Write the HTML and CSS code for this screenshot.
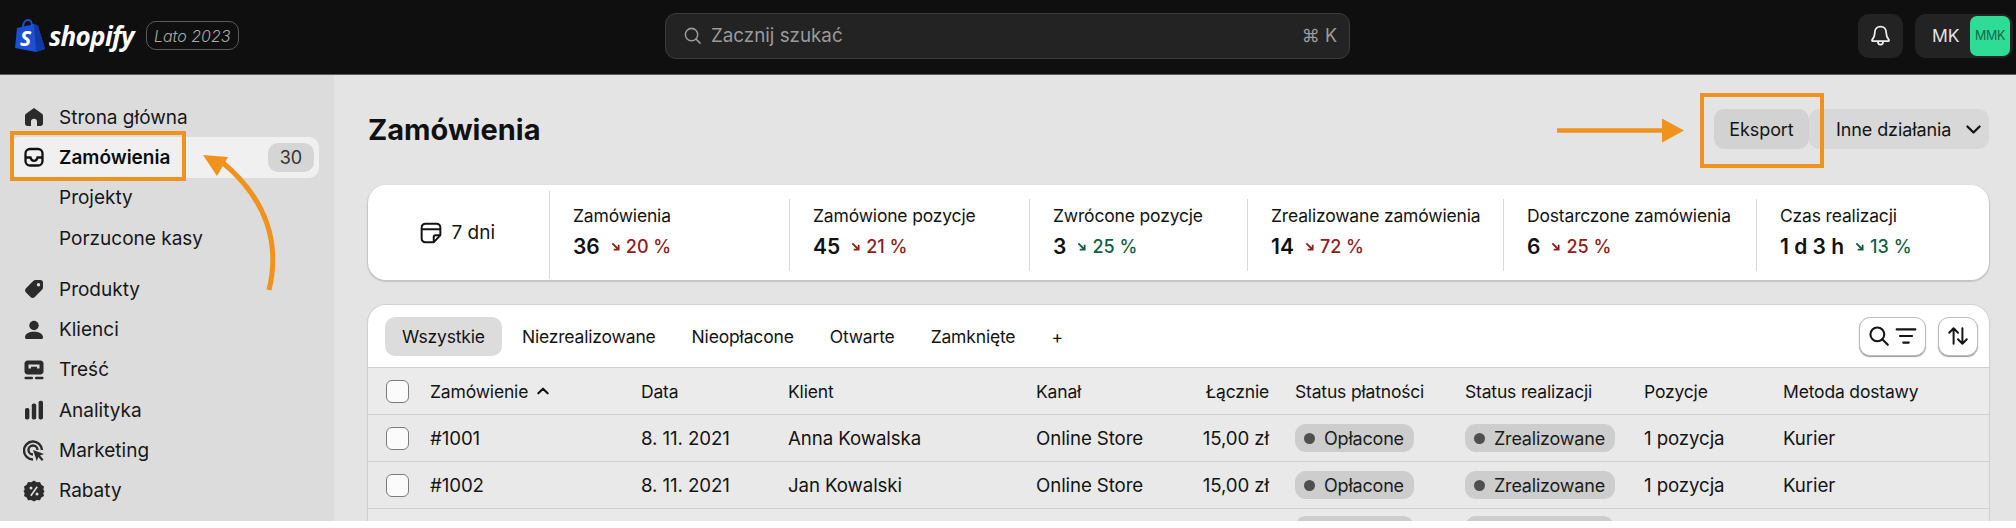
FILE: index.html
```html
<!DOCTYPE html>
<html lang="pl">
<head>
<meta charset="utf-8">
<title>Zamówienia</title>
<link rel="stylesheet" href="styles.css">
</head>
<body>
<div class="app">
  <header class="topbar">
    <div class="brand">
      <svg class="bag" viewBox="0 0 32 34"><path d="M3 9 L20 5 L24 7 L31 30 L22 33 L1 29Z" fill="#1d4fd3"/><path d="M20 5 L24 7 L31 30 L22 33Z" fill="#0f3aa6"/><path d="M9 8C9 3 12 1 14 1C17 1 18 3 18 7" fill="none" stroke="#1d4fd3" stroke-width="1.8"/><text x="6" y="27" class="bag-s">S</text></svg>
      <span class="wordmark">shopify</span>
      <span class="edition">Lato 2023</span>
    </div>
    <div class="search">
      <svg class="search-icon" viewBox="0 0 20 20"><circle cx="9" cy="9" r="6.5" fill="none" stroke="currentColor" stroke-width="1.6"/><path d="M13.8 13.8L18 18" stroke="currentColor" stroke-width="1.6" stroke-linecap="round"/></svg>
      <span class="search-text">Zacznij szukać</span>
      <span class="kbd">⌘ K</span>
    </div>
    <div class="top-actions">
      <button class="bell"><svg viewBox="0 0 22 22" class="bell-icon"><path d="M11 2.5C7.5 2.5 5.5 5 5.5 8.5C5.5 12 4.6 13.4 3 15.2C2.6 15.7 2.9 16.3 3.5 16.3H18.5C19.1 16.3 19.4 15.7 19 15.2C17.4 13.4 16.500 12 16.500 8.5C16.500 5 14.500 2.500 11 2.500Z" fill="none" stroke="currentColor" stroke-width="1.7"/><path d="M8.500 16.500C8.500 18.500 9.500 19.800 11 19.800C12.500 19.800 13.500 18.500 13.500 16.500" fill="none" stroke="currentColor" stroke-width="1.7"/></svg></button>
      <div class="account"><span class="initials">MK</span><span class="avatar">MMK</span></div>
    </div>
  </header>

  <div class="content">
    <nav class="sidebar">
      <div class="nav-group">
        <a class="nav-item"><svg class="nav-icon" viewBox="0 0 20 20"><path d="M10 1L2.300 6.600C1.500 7.200 1 8 1 9V16.500C1 18 2 19 3.500 19H7V14.500C7 12.800 8.200 11.800 10 11.800C11.800 11.800 13 12.800 13 14.500V19H16.500C18 19 19 18 19 16.500V9C19 8 18.500 7.200 17.700 6.600Z"/></svg><span>Strona główna</span></a>
        <a class="nav-item active"><svg class="nav-icon" viewBox="0 0 20 20"><rect x="1.500" y="2" width="17" height="16.500" rx="4.500" fill="none" stroke="currentColor" stroke-width="2.300"/><path d="M2 10.500H6.500C7 12.700 8.200 13.800 10 13.800C11.800 13.800 13 12.700 13.500 10.500H18" fill="none" stroke="currentColor" stroke-width="2.300"/></svg><span>Zamówienia</span><span class="count">30</span></a>
        <a class="nav-item"><span class="nav-spacer"></span><span>Projekty</span></a>
        <a class="nav-item"><span class="nav-spacer"></span><span>Porzucone kasy</span></a>
      </div>
      <div class="nav-group">
        <a class="nav-item"><svg class="nav-icon" viewBox="0 0 20 20"><path fill-rule="evenodd" d="M11.500 1H16.500C18 1 19 2 19 3.500V8.500C19 9.300 18.700 10.200 18 10.800L10.800 18C9.600 19.200 7.700 19.200 6.500 18L2 13.500C.8 12.300 .8 10.400 2 9.200L9.200 2C9.800 1.300 10.700 1 11.500 1ZM14.500 7.500A1.700 1.700 0 1 0 14.500 4.100A1.700 1.700 0 0 0 14.500 7.500Z"/></svg><span>Produkty</span></a>
        <a class="nav-item"><svg class="nav-icon" viewBox="0 0 20 20"><circle cx="10" cy="5.500" r="4.700"/><path d="M1 17.500C1 13.800 5 11.800 10 11.800C15 11.800 19 13.800 19 17.500C19 18.400 18.400 19 17.500 19H2.500C1.600 19 1 18.400 1 17.500Z"/></svg><span>Klienci</span></a>
        <a class="nav-item"><svg class="nav-icon" viewBox="0 0 20 20"><path fill-rule="evenodd" d="M3.500 .5H16.500C18.100 .5 19.500 1.900 19.500 3.500V11.500C19.500 13.100 18.100 14.500 16.500 14.500H3.500C1.900 14.500 .5 13.100 .5 11.500V3.500C.5 1.900 1.900 .5 3.500 .5ZM4.500 4.500V8.500H7V6.800H13V8.500H15.500V4.500Z"/><rect x=".5" y="16.800" width="8.500" height="2.400" rx="1"/><rect x="11" y="16.800" width="8.500" height="2.400" rx="1"/></svg><span>Treść</span></a>
        <a class="nav-item"><svg class="nav-icon" viewBox="0 0 20 20"><rect x="1" y="8" width="4.400" height="11.500" rx="1.800"/><rect x="7.800" y="3.500" width="4.400" height="16" rx="1.800"/><rect x="14.600" y=".8" width="4.400" height="18.700" rx="1.800"/></svg><span>Analityka</span></a>
        <a class="nav-item"><svg class="nav-icon wide" viewBox="0 0 22 22"><path d="M10 19.500A9 9 0 1 1 19 10" fill="none" stroke="currentColor" stroke-width="2.400"/><path d="M10 14.500A4.500 4.500 0 1 1 14.500 10" fill="none" stroke="currentColor" stroke-width="2.400"/><path d="M10 10L21 14L17 15.600L20.500 19.500L18.800 21L15.400 17L13.800 21Z"/></svg><span>Marketing</span></a>
        <a class="nav-item"><svg class="nav-icon wide" viewBox="0 0 22 22"><path fill-rule="evenodd" d="M11 .5L13.800 2.200L17 1.900L18.300 4.800L21 6.500L20.300 9.700L21.500 11L20.300 13.500L21 16L18.300 17.500L17 20.300L13.800 20L11 21.500L8.200 20L5 20.300L3.700 17.500L1 16L1.700 13.500L.5 11L1.700 9.700L1 6.500L3.700 4.800L5 1.900L8.200 2.200ZM7.200 15.200L8.500 16.300L14.800 7.200L13.500 6.200ZM8 9.500A1.500 1.500 0 1 0 8 6.500A1.500 1.500 0 0 0 8 9.500ZM14 15.500A1.500 1.500 0 1 0 14 12.500A1.500 1.500 0 0 0 14 15.500Z"/></svg><span>Rabaty</span></a>
      </div>
    </nav>

    <main class="main">
      <div class="page-head">
        <h1 class="page-title">Zamówienia</h1>
        <div class="page-actions">
          <button class="btn">Eksport</button>
          <button class="btn more">Inne działania <svg class="chev" viewBox="0 0 14 14"><path d="M2 4.500L7 9.500L12 4.500" fill="none" stroke="currentColor" stroke-width="1.900" stroke-linecap="round" stroke-linejoin="round"/></svg></button>
        </div>
      </div>

      <section class="metrics">
        <div class="metric period"><svg class="note" viewBox="0 0 20 20"><path d="M5 1.500H15C17 1.500 18.500 3 18.500 5V12L12.500 18.500H5C3 18.500 1.500 17 1.500 15V5C1.500 3 3 1.500 5 1.500Z" fill="none" stroke="currentColor" stroke-width="1.800"/><path d="M1.500 6.500H18.500M18.500 12H14C13 12 12.500 12.500 12.500 13.500V18.500" fill="none" stroke="currentColor" stroke-width="1.800"/></svg><span>7 dni</span></div>
        <div class="metric"><div class="m-label">Zamówienia</div><div class="m-value"><b>36</b><span class="delta bad"><svg class="trend" viewBox="0 0 10 10"><path d="M1.500 1.500L7.500 7.500M8.500 3V8.500H3" fill="none" stroke="currentColor" stroke-width="2"/></svg>20 %</span></div></div>
        <div class="metric"><div class="m-label">Zamówione pozycje</div><div class="m-value"><b>45</b><span class="delta bad"><svg class="trend" viewBox="0 0 10 10"><path d="M1.500 1.500L7.500 7.500M8.500 3V8.500H3" fill="none" stroke="currentColor" stroke-width="2"/></svg>21 %</span></div></div>
        <div class="metric"><div class="m-label">Zwrócone pozycje</div><div class="m-value"><b>3</b><span class="delta good"><svg class="trend" viewBox="0 0 10 10"><path d="M1.500 1.500L7.500 7.500M8.500 3V8.500H3" fill="none" stroke="currentColor" stroke-width="2"/></svg>25 %</span></div></div>
        <div class="metric"><div class="m-label">Zrealizowane zamówienia</div><div class="m-value"><b>14</b><span class="delta bad"><svg class="trend" viewBox="0 0 10 10"><path d="M1.500 1.500L7.500 7.500M8.500 3V8.500H3" fill="none" stroke="currentColor" stroke-width="2"/></svg>72 %</span></div></div>
        <div class="metric"><div class="m-label">Dostarczone zamówienia</div><div class="m-value"><b>6</b><span class="delta bad"><svg class="trend" viewBox="0 0 10 10"><path d="M1.500 1.500L7.500 7.500M8.500 3V8.500H3" fill="none" stroke="currentColor" stroke-width="2"/></svg>25 %</span></div></div>
        <div class="metric"><div class="m-label">Czas realizacji</div><div class="m-value"><b>1 d 3 h</b><span class="delta good"><svg class="trend" viewBox="0 0 10 10"><path d="M1.500 1.500L7.500 7.500M8.500 3V8.500H3" fill="none" stroke="currentColor" stroke-width="2"/></svg>13 %</span></div></div>
      </section>

      <section class="orders">
        <div class="tabs">
          <span class="tab selected">Wszystkie</span>
          <span class="tab">Niezrealizowane</span>
          <span class="tab">Nieopłacone</span>
          <span class="tab">Otwarte</span>
          <span class="tab">Zamknięte</span>
          <span class="tab">+</span>
          <div class="tools">
            <button class="tool filter"><svg class="tool-icon" viewBox="0 0 20 20"><circle cx="8.500" cy="8.500" r="6.300" fill="none" stroke="currentColor" stroke-width="1.900"/><path d="M13 13L18 18" stroke="currentColor" stroke-width="1.900" stroke-linecap="round"/></svg><svg class="tool-icon" viewBox="0 0 20 20"><path d="M1.500 4H18.500M4.500 10H15.500M7.500 16H12.500" stroke="currentColor" stroke-width="1.900" stroke-linecap="round"/></svg></button>
            <button class="tool sort"><svg class="tool-icon" viewBox="0 0 20 20"><path d="M6 17V3M2 7L6 3L10 7M14 3V17M10 13L14 17L18 13" fill="none" stroke="currentColor" stroke-width="1.800" stroke-linecap="round" stroke-linejoin="round"/></svg></button>
          </div>
        </div>
        <div class="row head">
          <span class="check-cell"><span class="check"></span></span>
          <span class="sort-head">Zamówienie <svg class="caret" viewBox="0 0 12 12"><path d="M2 8L6 4L10 8" fill="none" stroke="currentColor" stroke-width="1.800" stroke-linecap="round" stroke-linejoin="round"/></svg></span>
          <span>Data</span><span>Klient</span><span>Kanał</span><span class="total">Łącznie</span><span>Status płatności</span><span>Status realizacji</span><span>Pozycje</span><span>Metoda dostawy</span>
        </div>
        <div class="row">
          <span class="check-cell"><span class="check"></span></span>
          <span>#1001</span><span>8. 11. 2021</span><span>Anna Kowalska</span><span>Online Store</span><span class="total">15,00 zł</span>
          <span><span class="pill"><i class="dot"></i>Opłacone</span></span><span><span class="pill"><i class="dot"></i>Zrealizowane</span></span><span>1 pozycja</span><span>Kurier</span>
        </div>
        <div class="row">
          <span class="check-cell"><span class="check"></span></span>
          <span>#1002</span><span>8. 11. 2021</span><span>Jan Kowalski</span><span>Online Store</span><span class="total">15,00 zł</span>
          <span><span class="pill"><i class="dot"></i>Opłacone</span></span><span><span class="pill"><i class="dot"></i>Zrealizowane</span></span><span>1 pozycja</span><span>Kurier</span>
        </div>
        <div class="row">
          <span class="check-cell"></span>
          <span></span><span></span><span></span><span></span><span></span>
          <span><span class="pill ghost"></span></span><span><span class="pill ghost wide"></span></span><span></span><span></span>
        </div>
      </section>
    </main>

    <div class="callout callout-nav"></div>
    <div class="callout callout-export"></div>
    <svg class="arrows" viewBox="0 0 2016 446">
      <path d="M269 215C280 170 268 125 222 87" fill="none" stroke="#f0931e" stroke-width="5"/>
      <path d="M203 80L228 82L217 101Z" fill="#f0931e"/>
      <path d="M1557 55.500H1664" fill="none" stroke="#f0931e" stroke-width="4.500"/>
      <path d="M1662 43.500L1684 55.500L1662 67.500Z" fill="#f0931e"/>
    </svg>
  </div>
</div>
</body>
</html>
```
FILE: styles.css
```css
* { box-sizing: border-box; }
html, body { margin: 0; padding: 0; background: #fff; }
body { font-family: Inter, "Liberation Sans", sans-serif; color: #141414; font-size: 18px; }
button { font: inherit; color: inherit; border: 0; padding: 0; }

.app { height: 521px; overflow: hidden; display: flex; flex-direction: column; }

.topbar { height: 75px; flex: none; background: #0f0f0f; border-bottom: 1px solid #5c5c5c; padding-bottom: 3px; display: grid; grid-template-columns: 665px 685px 1fr; align-items: center; }
.brand { display: flex; align-items: center; padding-left: 14px; }
.bag { width: 32px; height: 34px; }
.bag-s { font: italic 700 21px "Open Sans", sans-serif; fill: #fff; }
.wordmark { font: italic 700 26px/34px "Open Sans", sans-serif; color: #fff; margin-left: 3px; letter-spacing: -.7px; }
.edition { margin-left: 12px; height: 29px; width: 93px; border: 1px solid #5a5a5a; border-radius: 10px; color: #a8a8a8; font-size: 16px; font-style: italic; font-weight: 300; display: flex; align-items: center; justify-content: center; }

.search { height: 46px; background: #232323; border: 1px solid #3c3c3c; border-radius: 11px; display: flex; align-items: center; padding: 0 12px 0 17px; color: #9b9b9b; }
.search-icon { width: 19px; height: 19px; }
.search-text { margin-left: 9px; font-size: 18.800px; }
.kbd { margin-left: auto; font-size: 18px; }

.top-actions { display: flex; justify-content: flex-end; gap: 12px; padding-right: 3px; }
.bell { width: 45px; height: 44px; background: #232323; border-radius: 11px; color: #eee; display: flex; align-items: center; justify-content: center; }
.bell-icon { width: 23px; height: 23px; }
.account { width: 98px; height: 44px; background: #232323; border-radius: 11px; display: flex; align-items: center; justify-content: space-between; padding: 0 3px 0 17px; color: #e3e3e3; }
.initials { font-size: 17.500px; }
.avatar { width: 40px; height: 40px; background: #2fdc96; border-radius: 7px; color: #0f6b4a; font-size: 12.500px; display: flex; align-items: center; justify-content: center; letter-spacing: -.3px; }

.content { position: relative; flex: 1; display: flex; min-height: 0; background: #e4e4e4; }

.sidebar { width: 334px; flex: none; background: #dcdcdc; padding: 22px 15px 0 10px; }
.nav-group + .nav-group { margin-top: 11px; }
.nav-item { height: 40.300px; display: flex; align-items: center; padding: 0 5px 0 14px; border-radius: 10px; font-size: 19px; color: #171717; }
.nav-icon { width: 20px; height: 20px; flex: none; margin-right: 15px; fill: #2b2b2b; color: #2b2b2b; }
.nav-icon.wide { width: 22px; height: 22px; margin: 0 14px 0 -1px; }
.nav-spacer { width: 20px; margin-right: 15px; }
.nav-item.active { background: #f0f0f0; font-weight: 600; color: #0c0c0c; }
.nav-item.active .nav-icon { fill: none; color: #111; }
.count { margin-left: auto; width: 46px; height: 29px; background: #d5d5d5; border-radius: 10px; font-size: 18px; font-weight: 400; color: #333; display: flex; align-items: center; justify-content: center; }

.main { flex: 1; min-width: 0; padding: 34px 27px 0 34px; overflow: hidden; }
.page-head { height: 40px; display: flex; align-items: center; justify-content: space-between; }
.page-title { margin: 0; font-size: 29px; font-weight: 700; color: #111; }
.page-actions { display: flex; }
.btn { height: 40px; width: 95px; background: #d2d2d2; border-radius: 10px; font-size: 18px; font-weight: 400; letter-spacing: -.1px; display: flex; align-items: center; justify-content: center; }
.btn.more { width: 180px; gap: 14px; background: #d8d8d8; justify-content: flex-start; padding-left: 27px; }
.chev { width: 17px; height: 17px; }

.metrics { margin-top: 36px; height: 95px; background: #fff; border-radius: 18px; box-shadow: 0 1px 1px 1px #c4c4c4; display: grid; grid-template-columns: 181px 240px 240px 218px 256px 253px 233px; align-items: center; }
.metric { position: relative; padding-left: 24px; }
.metric + .metric::before { content: ""; position: absolute; left: 0; top: -6px; bottom: -10px; width: 1px; background: #d8d8d8; }
.metric.period + .metric::before { top: -14px; bottom: -18px; }
.period { display: flex; align-items: center; justify-content: flex-end; gap: 9px; padding: 0 54px 0 0; font-size: 19px; height: 100%; }
.note { width: 22px; height: 22px; }
.m-label { font-size: 17.500px; letter-spacing: -.17px; line-height: 22px; }
.m-value { margin-top: 6px; display: flex; align-items: center; line-height: 28px; gap: 11px; }
.m-value b { font-size: 21px; font-weight: 600; color: #111; }
.delta { display: flex; align-items: center; gap: 6px; font-size: 18px; font-weight: 500; }
.bad { color: #8e2020; }
.good { color: #135f42; }
.trend { width: 9px; height: 9px; }

.orders { margin-top: 25px; background: #fff; border-radius: 18px 18px 0 0; box-shadow: 0 0 1px 1px #cfcfcf; overflow: hidden; }
.tabs { height: 62px; display: flex; align-items: center; padding: 0 11px 0 17px; }
.tab { height: 39px; padding: 0 17px; border-radius: 10px; display: flex; align-items: center; font-size: 17.500px; letter-spacing: -.17px; margin-right: 2px; }
.tab.selected { background: #dcdcdc; margin-right: 3px; }
.tools { margin-left: auto; display: flex; gap: 12px; }
.tool { height: 39px; background: #fff; border: 1px solid #bcbcbc; border-radius: 11px; box-shadow: 0 1px 1px #9c9c9c; display: flex; align-items: center; justify-content: center; }
.filter { width: 67px; gap: 5px; }
.sort { width: 40px; }
.tool-icon { width: 22px; height: 22px; }
.row { height: 47px; display: grid; grid-template-columns: 62px 211px 147px 248px 114px 145px 170px 179px 139px 206px; align-items: center; background: #e9e9e9; border-top: 1px solid #d0d0d0; font-size: 18.700px; letter-spacing: -.1px; white-space: nowrap; }
.row.head { background: #ebebeb; font-size: 17.500px; letter-spacing: -.17px; }
.check-cell { padding-left: 18px; display: flex; }
.check { width: 23px; height: 23px; background: #fbfbfb; border: 1px solid #7c7c7c; border-radius: 6px; }
.sort-head { display: flex; align-items: center; gap: 8px; }
.caret { width: 14px; height: 14px; }
.total { text-align: right; padding-right: 26px; }
.pill { display: inline-flex; align-items: center; height: 28px; padding: 0 10px 0 9px; background: #cdcdcd; border-radius: 11px; font-size: 18px; letter-spacing: -.2px; color: #1c1c1c; }
.pill.ghost { width: 119px; }
.pill.ghost.wide { width: 149px; }
.dot { width: 11px; height: 11px; border-radius: 50%; background: #4f4f4f; margin-right: 9px; }

.callout { position: absolute; border: 4px solid #f0931e; }
.callout-nav { left: 10px; top: 56px; width: 176px; height: 50px; }
.callout-export { left: 1700px; top: 18px; width: 124px; height: 75px; }
.arrows { position: absolute; left: 0; top: 0; width: 2016px; height: 446px; pointer-events: none; }
```
